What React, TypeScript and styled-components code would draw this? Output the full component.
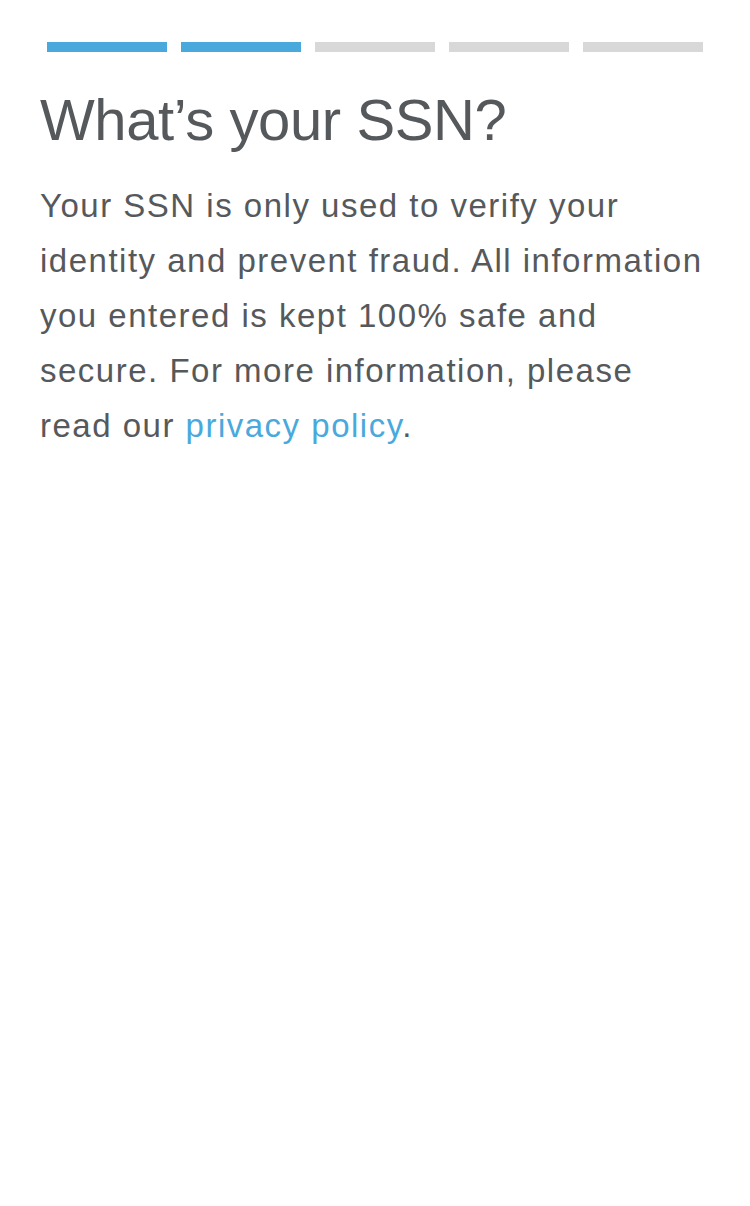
import styled, { createGlobalStyle } from "styled-components";

const GlobalStyle = createGlobalStyle`
  html, body {
    margin: 0;
    padding: 0;
    background: #ffffff;
  }
  body {
    font-family: "Liberation Sans", Arial, sans-serif;
  }
`;

const Screen = styled.div`
  width: 750px;
  min-height: 1206px;
  background: #ffffff;
  display: flex;
  flex-direction: column;
`;

const Progress = styled.div`
  display: flex;
  gap: 14px;
  padding: 42px 47px 0;
`;

const Step = styled.div<{ $done?: boolean }>`
  flex: 1;
  height: 10px;
  background: ${(p) => (p.$done ? "#4aa9dc" : "#d8d8d8")};
`;

const Content = styled.div`
  padding: 33px 40px 0;
  display: flex;
  flex-direction: column;
  gap: 23px;
`;

const Title = styled.h1`
  margin: 0;
  font-size: 58px;
  line-height: 70px;
  font-weight: 400;
  letter-spacing: -0.4px;
  color: #56595c;
`;

const Body = styled.p`
  margin: 0;
  max-width: 667px;
  font-size: 33px;
  line-height: 55px;
  letter-spacing: 1.5px;
  color: #56595c;
`;

const Link = styled.a`
  color: #4aa9dc;
  text-decoration: none;
`;

const steps = [true, true, false, false, false];

export default function App() {
  return (
    <Screen>
      <GlobalStyle />
      <Progress>
        {steps.map((done, i) => (
          <Step key={i} $done={done} />
        ))}
      </Progress>
      <Content>
        <Title>What’s your SSN?</Title>
        <Body>
          Your SSN is only used to verify your identity and prevent fraud. All
          information you entered is kept 100% safe and secure. For more
          information, please read our <Link href="#">privacy policy</Link>.
        </Body>
      </Content>
    </Screen>
  );
}
